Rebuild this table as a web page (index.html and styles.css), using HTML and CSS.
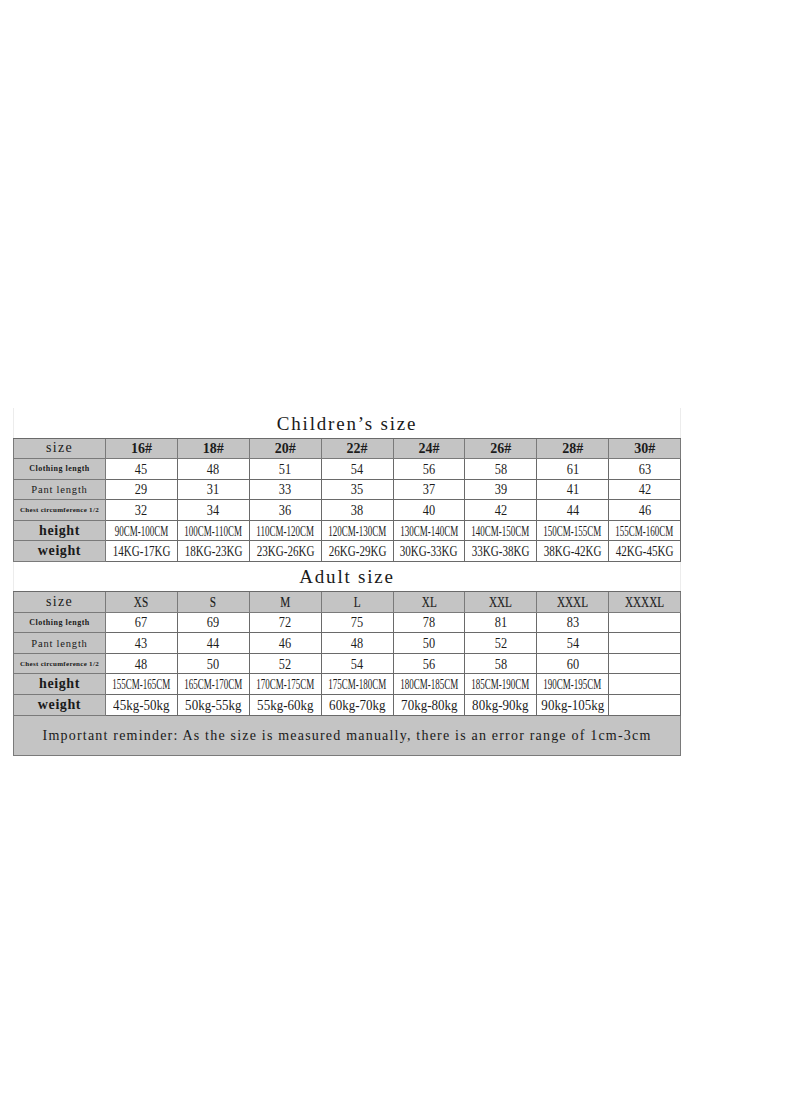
FILE: index.html
```html
<!DOCTYPE html>
<html>
<head>
<meta charset="utf-8">
<link rel="stylesheet" href="styles.css">
</head>
<body>
<div class="sheet">
<table class="chart">
<colgroup>
<col class="c-label">
<col class="c"><col class="c"><col class="c"><col class="c"><col class="c"><col class="c"><col class="c"><col class="c">
</colgroup>
<tbody>
<tr class="title-row"><td colspan="9" class="title">Children’s size</td></tr>
<tr class="row head">
<td class="lab l-size">size</td>
<td><span class="hn">16#</span></td><td><span class="hn">18#</span></td><td><span class="hn">20#</span></td><td><span class="hn">22#</span></td><td><span class="hn">24#</span></td><td><span class="hn">26#</span></td><td><span class="hn">28#</span></td><td><span class="hn">30#</span></td>
</tr>
<tr class="row">
<td class="lab l-cloth">Clothing length</td>
<td><span class="n">45</span></td><td><span class="n">48</span></td><td><span class="n">51</span></td><td><span class="n">54</span></td><td><span class="n">56</span></td><td><span class="n">58</span></td><td><span class="n">61</span></td><td><span class="n">63</span></td>
</tr>
<tr class="row">
<td class="lab l-pant">Pant length</td>
<td><span class="n">29</span></td><td><span class="n">31</span></td><td><span class="n">33</span></td><td><span class="n">35</span></td><td><span class="n">37</span></td><td><span class="n">39</span></td><td><span class="n">41</span></td><td><span class="n">42</span></td>
</tr>
<tr class="row">
<td class="lab l-chest">Chest circumference 1/2</td>
<td><span class="n">32</span></td><td><span class="n">34</span></td><td><span class="n">36</span></td><td><span class="n">38</span></td><td><span class="n">40</span></td><td><span class="n">42</span></td><td><span class="n">44</span></td><td><span class="n">46</span></td>
</tr>
<tr class="row">
<td class="lab l-big">height</td>
<td><span class="r">90CM-100CM</span></td><td><span class="r">100CM-110CM</span></td><td><span class="r">110CM-120CM</span></td><td><span class="r">120CM-130CM</span></td><td><span class="r">130CM-140CM</span></td><td><span class="r">140CM-150CM</span></td><td><span class="r">150CM-155CM</span></td><td><span class="r">155CM-160CM</span></td>
</tr>
<tr class="row">
<td class="lab l-big">weight</td>
<td><span class="w">14KG-17KG</span></td><td><span class="w">18KG-23KG</span></td><td><span class="w">23KG-26KG</span></td><td><span class="w">26KG-29KG</span></td><td><span class="w">30KG-33KG</span></td><td><span class="w">33KG-38KG</span></td><td><span class="w">38KG-42KG</span></td><td><span class="w">42KG-45KG</span></td>
</tr>

<tr class="title-row"><td colspan="9" class="title">Adult size</td></tr>
<tr class="row head">
<td class="lab l-size">size</td>
<td><span class="hs">XS</span></td><td><span class="hs">S</span></td><td><span class="hs">M</span></td><td><span class="hs">L</span></td><td><span class="hs">XL</span></td><td><span class="hs">XXL</span></td><td><span class="hs">XXXL</span></td><td><span class="hs">XXXXL</span></td>
</tr>
<tr class="row">
<td class="lab l-cloth">Clothing length</td>
<td><span class="n">67</span></td><td><span class="n">69</span></td><td><span class="n">72</span></td><td><span class="n">75</span></td><td><span class="n">78</span></td><td><span class="n">81</span></td><td><span class="n">83</span></td><td></td>
</tr>
<tr class="row">
<td class="lab l-pant">Pant length</td>
<td><span class="n">43</span></td><td><span class="n">44</span></td><td><span class="n">46</span></td><td><span class="n">48</span></td><td><span class="n">50</span></td><td><span class="n">52</span></td><td><span class="n">54</span></td><td></td>
</tr>
<tr class="row">
<td class="lab l-chest">Chest circumference 1/2</td>
<td><span class="n">48</span></td><td><span class="n">50</span></td><td><span class="n">52</span></td><td><span class="n">54</span></td><td><span class="n">56</span></td><td><span class="n">58</span></td><td><span class="n">60</span></td><td></td>
</tr>
<tr class="row">
<td class="lab l-big">height</td>
<td><span class="r">155CM-165CM</span></td><td><span class="r">165CM-170CM</span></td><td><span class="r">170CM-175CM</span></td><td><span class="r">175CM-180CM</span></td><td><span class="r">180CM-185CM</span></td><td><span class="r">185CM-190CM</span></td><td><span class="r">190CM-195CM</span></td><td></td>
</tr>
<tr class="row">
<td class="lab l-big">weight</td>
<td><span class="wl">45kg-50kg</span></td><td><span class="wl">50kg-55kg</span></td><td><span class="wl">55kg-60kg</span></td><td><span class="wl">60kg-70kg</span></td><td><span class="wl">70kg-80kg</span></td><td><span class="wl">80kg-90kg</span></td><td><span class="wl">90kg-105kg</span></td><td></td>
</tr>
<tr class="note-row"><td colspan="9" class="note">Important reminder: As the size is measured manually, there is an error range of 1cm-3cm</td></tr>
</tbody>
</table>
</div>
</body>
</html>
```

FILE: styles.css
```css
html, body {
  margin: 0;
  padding: 0;
  background: #ffffff;
}

.sheet {
  padding: 408px 0 0 13px;
}

.chart {
  border-collapse: collapse;
  table-layout: fixed;
  width: 667px;
  color: #1c1c1c;
  font-family: "Liberation Serif", serif;
}

.c-label { width: 92px; }
.c { width: 71.875px; }

.chart td {
  padding: 0;
  text-align: center;
  vertical-align: middle;
  white-space: nowrap;
  overflow: visible;
  background: #ffffff;
  border: 1px solid #6a6a6a;
}

.title-row { height: 30px; }
.chart td.title {
  border-top: none;
  border-left: 1px solid #ececec;
  border-right: 1px solid #ececec;
  font-size: 19px;
  letter-spacing: 1.8px;
  vertical-align: bottom;
  padding-bottom: 3px;
  color: #1a1a1a;
}

.row { height: 20.6px; }

.chart .head td,
.chart td.lab {
  background: #c4c4c4;
  border-color: #7a7a7a;
}

.lab {
  color: #1a1a1a;
}
.l-size { font-size: 14px; letter-spacing: 1.3px; }
.l-big { font-size: 14px; font-weight: bold; letter-spacing: 0.6px; }
.l-pant { font-size: 10.5px; letter-spacing: 0.8px; }
.l-cloth { font-size: 8px; font-weight: bold; letter-spacing: 0.5px; }
.l-chest { font-size: 7px; font-weight: bold; letter-spacing: 0.3px; }

.hn {
  font-weight: bold;
  font-size: 14px;
}

.hs {
  display: inline-block;
  font-size: 14px;
  margin: 0 -10px;
  transform: scaleX(0.8);
  -webkit-text-stroke: 0.15px #1a1a1a;
}

.n {
  display: inline-block;
  font-size: 14px;
  transform: scaleX(0.88);
}

.r {
  display: inline-block;
  font-size: 15px;
  margin: 0 -30px;
  transform: scaleX(0.6);
}

.w {
  display: inline-block;
  font-size: 14px;
  margin: 0 -20px;
  transform: scaleX(0.79);
}

.wl {
  display: inline-block;
  font-size: 14px;
  margin: 0 -20px;
  transform: scaleX(0.93);
}

.note-row { height: 40.4px; }
.chart td.note {
  background: #c4c4c4;
  border-color: #7a7a7a;
  font-size: 14px;
  letter-spacing: 1.2px;
  padding-top: 2px;
  color: #1a1a1a;
}
```
